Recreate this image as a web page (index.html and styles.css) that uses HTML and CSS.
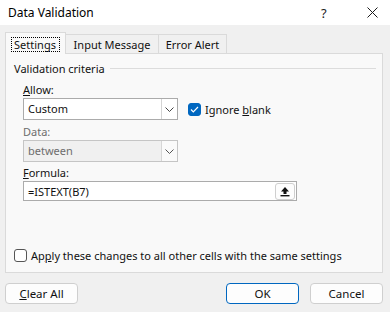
FILE: index.html
```html
<!DOCTYPE html>
<html>
<head>
<meta charset="utf-8">
<link rel="stylesheet" href="styles.css">
</head>
<body>
<div class="dialog">
  <div class="titlebar">
    <span class="title">Data Validation</span>
    <span class="help">?</span>
    <svg class="close" width="11" height="11" viewBox="0 0 11 11"><path d="M0.5 0.5 L10.5 10.5 M10.5 0.5 L0.5 10.5" stroke="#1a1a1a" stroke-width="1"/></svg>
  </div>
  <div class="tabs">
    <div class="tab active t1"><span class="focus">Settings</span></div>
    <div class="tab t2">Input Message</div>
    <div class="tab t3">Error Alert</div>
  </div>
  <div class="panel">
    <div class="legend"><span>Validation criteria</span><div class="rule"></div></div>
    <div class="label"><u>A</u>llow:</div>
    <div class="row">
      <div class="combo">
        <span class="value">Custom</span>
        <span class="drop"><svg width="9" height="5" viewBox="0 0 9 5"><path d="M0.5 0.5 L4.5 4.5 L8.5 0.5" fill="none" stroke="#444" stroke-width="1"/></svg></span>
      </div>
      <label class="check">
        <span class="box on"><svg width="9" height="7" viewBox="0 0 9 7"><path d="M1 3.5 L3.3 5.8 L8 1" fill="none" stroke="#fff" stroke-width="1.2"/></svg></span>
        <span>Ignore <u>b</u>lank</span>
      </label>
    </div>
    <div class="label disabled">Data:</div>
    <div class="combo off">
      <span class="value">between</span>
      <span class="drop"><svg width="9" height="5" viewBox="0 0 9 5"><path d="M0.5 0.5 L4.5 4.5 L8.5 0.5" fill="none" stroke="#555" stroke-width="1"/></svg></span>
    </div>
    <div class="label"><u>F</u>ormula:</div>
    <div class="formula">
      <span class="value">=ISTEXT(B7)</span>
      <span class="pick"><svg width="10" height="11" viewBox="0 0 10 11"><path d="M5 1 L1 5.5 L3.5 5.5 L3.5 8 L6.5 8 L6.5 5.5 L9 5.5 Z" fill="#111"/><rect x="0.5" y="9" width="9" height="1.4" fill="#111"/></svg></span>
    </div>
    <div class="spacer"></div>
    <label class="check apply">
      <span class="box"></span>
      <span>Ap<u>p</u>ly these changes to all other cells with the same settings</span>
    </label>
  </div>
  <div class="buttons">
    <button class="btn"><u>C</u>lear All</button>
    <div class="grow"></div>
    <button class="btn primary">OK</button>
    <button class="btn">Cancel</button>
  </div>
</div>
</body>
</html>
```

FILE: styles.css
```css
* { box-sizing: border-box; }
html, body { margin: 0; padding: 0; }
body {
  width: 390px;
  height: 312px;
  background: #f0f0f0;
  font-family: "Noto Sans", "Open Sans", sans-serif;
  font-size: 11px;
  color: #111;
  overflow: hidden;
}
.dialog { width: 390px; height: 312px; display: flex; flex-direction: column; }
.titlebar {
  height: 25px;
  background: #fff;
  display: flex;
  align-items: center;
  padding-left: 8px;
}
.title { flex: 1; font-size: 12px; color: #000; }
.help { width: 10px; margin-right: 36px; font-size: 13px; color: #222; }
.close { margin-right: 12px; flex: none; }
.tabs {
  margin-top: 7px;
  padding-left: 5px;
  height: 21px;
  display: flex;
  align-items: flex-end;
  position: relative;
  z-index: 1;
}
.tab {
  height: 19px;
  border: 1px solid #dadada;
  border-bottom: none;
  border-left: none;
  display: flex;
  align-items: center;
  justify-content: center;
  background: #f0f0f0;
}
.t1 { width: 61px; }
.t2 { width: 93px; }
.t3 { width: 68px; }
.tab.active {
  border-left: 1px solid #dadada;
  background: #f9f9f9;
  margin-bottom: -1px;
  height: 22px;
}
.focus {
  outline: 1px dotted #000;
  padding: 0 3px 0 2px;
  line-height: 13px;
  margin-top: 1px;
}
.panel {
  margin: 0 7px 0 5px;
  height: 220px;
  border: 1px solid #dadada;
  background: #f9f9f9;
  padding: 6px 0 0 0;
  display: flex;
  flex-direction: column;
}
.legend {
  height: 16px;
  display: flex;
  align-items: center;
  padding-left: 8px;
  margin-bottom: 5px;
}
.legend .rule { flex: 1; height: 1px; background: #dcdcdc; margin: 0 6px 0 5px; }
.label {
  padding-left: 17px;
  height: 17px;
  line-height: 17px;
}
.label.disabled { color: #6d6d6d; }
.row { display: flex; align-items: center; }
.combo {
  margin-left: 17px;
  width: 155px;
  height: 22px;
  border: 1px solid #ababab;
  background: #fff;
  display: flex;
  align-items: stretch;
}
.combo .value { flex: 1; padding-left: 4px; line-height: 20px; }
.combo .drop {
  width: 16px;
  border-left: 1px solid #d4d4d4;
  display: flex;
  align-items: center;
  justify-content: center;
}
.combo.off {
  background: #f0f0f0;
  border-color: #c5c5c5;
  color: #6d6d6d;
  margin-bottom: 2px;
}
.combo.off .drop { background: #fafafa; border-left-color: #d6d6d6; }
.row .combo { margin-bottom: 3px; }
.check { display: flex; align-items: center; }
.row .check { margin-left: 10px; margin-bottom: 3px; }
.box {
  width: 13px;
  height: 13px;
  border: 1px solid #444;
  border-radius: 3px;
  margin-right: 4px;
  display: flex;
  align-items: center;
  justify-content: center;
  background: #fff;
}
.box.on { background: #0067c0; border-color: #0067c0; }
.formula {
  margin-left: 17px;
  width: 274px;
  height: 20px;
  border: 1px solid #ababab;
  background: #fff;
  display: flex;
  align-items: center;
  padding-right: 1px;
}
.formula .value { flex: 1; padding-left: 4px; }
.pick {
  width: 20px;
  height: 17px;
  border: 1px solid #cfcfcf;
  border-radius: 3px;
  background: #fdfdfd;
  display: flex;
  align-items: center;
  justify-content: center;
}
.spacer { flex: 1; }
.apply { padding-left: 8px; margin-bottom: 9px; }
.apply .box { border-color: #555; }
.buttons {
  display: flex;
  padding: 10px 7px 0 5px;
}
.grow { flex: 1; }
.btn {
  width: 73px;
  height: 21px;
  border: 1px solid #cfcfcf;
  border-radius: 4px;
  background: #fdfdfd;
  font-family: inherit;
  font-size: 11.5px;
  color: #111;
  padding: 0;
}
.btn.primary { border-color: #0067c0; margin-right: 11px; }
```
